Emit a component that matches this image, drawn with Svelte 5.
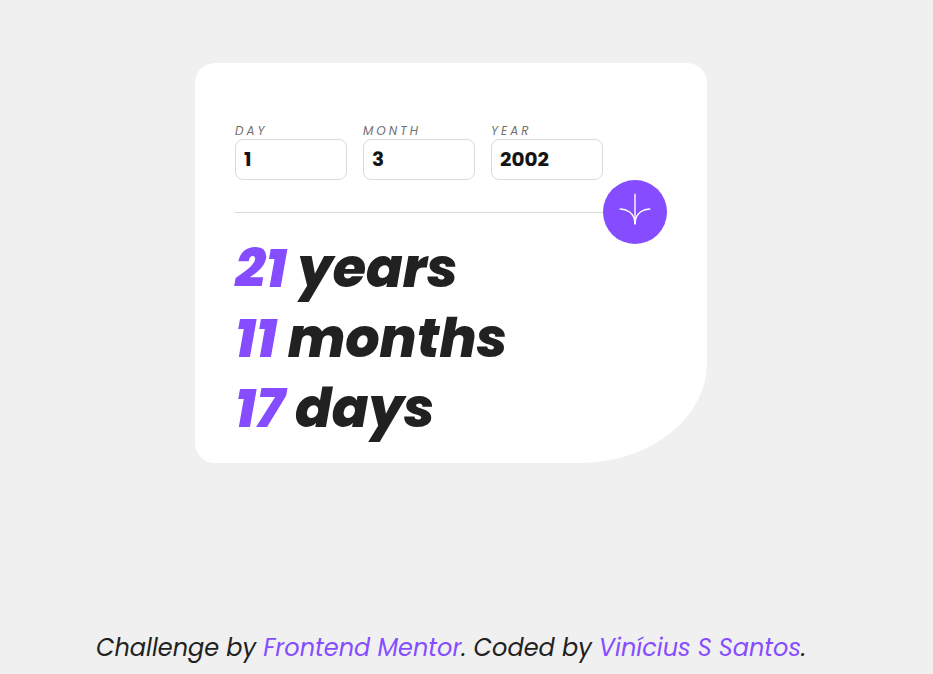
<script>
  let day = $state(1);
  let month = $state(3);
  let year = $state(2002);
  let results = $state([
    { value: 21, unit: 'years' },
    { value: 11, unit: 'months' },
    { value: 17, unit: 'days' }
  ]);

  function calculate(event) {
    event.preventDefault();
    const now = new Date();
    let y = now.getFullYear() - year;
    let m = now.getMonth() + 1 - month;
    let d = now.getDate() - day;
    if (d < 0) {
      m -= 1;
      d += new Date(now.getFullYear(), now.getMonth(), 0).getDate();
    }
    if (m < 0) {
      y -= 1;
      m += 12;
    }
    results = [
      { value: y, unit: 'years' },
      { value: m, unit: 'months' },
      { value: d, unit: 'days' }
    ];
  }
</script>

<div class="page">
  <main class="card">
    <form onsubmit={calculate}>
      <div class="fields">
        <div class="field">
          <label for="day">DAY</label>
          <input id="day" type="text" inputmode="numeric" bind:value={day} />
        </div>
        <div class="field">
          <label for="month">MONTH</label>
          <input id="month" type="text" inputmode="numeric" bind:value={month} />
        </div>
        <div class="field">
          <label for="year">YEAR</label>
          <input id="year" type="text" inputmode="numeric" bind:value={year} />
        </div>
      </div>
      <div class="divider">
        <span class="line"></span>
        <button type="submit" aria-label="Calculate age">
          <svg width="32" height="32" viewBox="0 0 46 44" fill="none" stroke="#fff" stroke-width="2">
            <path d="M1 22.019C8.333 21.686 23 25.616 23 44" />
            <path d="M23 44V0" />
            <path d="M45 22.019C37.667 21.686 23 25.616 23 44" />
          </svg>
        </button>
      </div>
    </form>
    <div class="results">
      {#each results as r}
        <p><span>{r.value}</span> {r.unit}</p>
      {/each}
    </div>
  </main>
  <footer>
    Challenge by <a href="#frontend-mentor">Frontend Mentor</a>. Coded by
    <a href="#author">Vinícius S Santos</a>.
  </footer>
</div>

<style>
  :global(body) {
    margin: 0;
    background: #f0f0f0;
  }

  .page {
    box-sizing: border-box;
    min-height: 100vh;
    padding: 63px 31px 0 0;
    display: flex;
    flex-direction: column;
    align-items: center;
    overflow: hidden;
    font-family: Poppins, Inter, sans-serif;
    font-style: italic;
    color: #212121;
  }

  .card {
    box-sizing: border-box;
    width: 100%;
    max-width: 512px;
    padding: 60px 40px 20px;
    background: #fff;
    border-radius: 20px 20px 25% 20px;
  }

  .fields {
    display: flex;
    gap: 16px;
    padding-right: 64px;
  }

  .field {
    flex: 1;
    min-width: 0;
    display: flex;
    flex-direction: column;
  }

  label {
    font-size: 12px;
    line-height: 16px;
    letter-spacing: 3px;
    color: #716f6f;
  }

  input {
    box-sizing: border-box;
    width: 100%;
    height: 41px;
    padding: 0 8px 2px;
    border: 1px solid #dbdbdb;
    border-radius: 8px;
    background: #fff;
    font-family: inherit;
    font-size: 20px;
    font-weight: 700;
    color: #141414;
  }

  .divider {
    display: flex;
    align-items: center;
  }

  .line {
    flex: 1;
    height: 1px;
    background: #dbdbdb;
  }

  button {
    width: 64px;
    height: 64px;
    padding: 0 0 6px;
    border: 0;
    border-radius: 50%;
    background: #864cff;
    display: flex;
    align-items: center;
    justify-content: center;
    cursor: pointer;
  }

  .results {
    margin-top: -11px;
  }

  p {
    margin: 0;
    font-size: 54px;
    line-height: 70px;
    font-weight: 800;
  }

  p span,
  a {
    color: #864cff;
  }

  a {
    text-decoration: none;
  }

  footer {
    margin-top: auto;
    padding-bottom: 8px;
    font-size: 24px;
    line-height: 36px;
    text-align: center;
  }
</style>
